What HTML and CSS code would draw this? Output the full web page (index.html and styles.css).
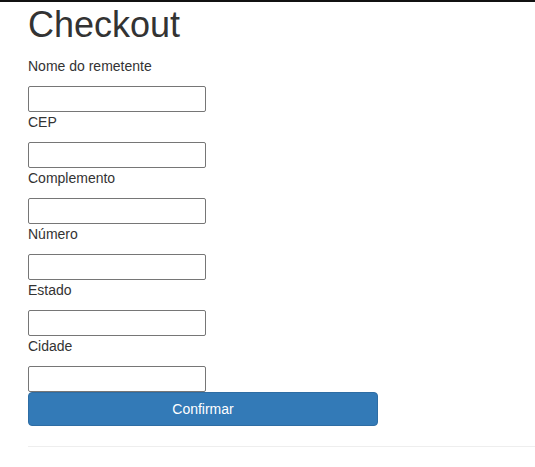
FILE: index.html
```
<!DOCTYPE html>
<html lang="pt-BR">
<head>
<meta charset="utf-8">
<title>Checkout</title>
<link rel="stylesheet" href="styles.css">
</head>
<body>
<div class="topbar"></div>
<main class="page">
  <h1 class="title">Checkout</h1>
  <form class="form">
    <label class="field-label" for="nome">Nome do remetente</label>
    <input class="field-input" id="nome" type="text">
    <label class="field-label" for="cep">CEP</label>
    <input class="field-input" id="cep" type="text">
    <label class="field-label" for="comp">Complemento</label>
    <input class="field-input" id="comp" type="text">
    <label class="field-label" for="num">Número</label>
    <input class="field-input" id="num" type="text">
    <label class="field-label" for="estado">Estado</label>
    <input class="field-input" id="estado" type="text">
    <label class="field-label" for="cidade">Cidade</label>
    <input class="field-input" id="cidade" type="text">
    <button class="btn-confirm" type="button">Confirmar</button>
  </form>
  <hr class="divider">
</main>
</body>
</html>
```
FILE: styles.css
```
html, body {
  margin: 0;
  padding: 0;
  background: #fff;
}
body {
  font-family: "Liberation Sans", Arial, Helvetica, sans-serif;
  font-size: 14px;
  line-height: 20px;
  color: #333;
  overflow: hidden;
}
.topbar {
  height: 2px;
  background: #111;
}
.page {
  padding-left: 28px;
}
.title {
  margin: 3px 0 0;
  font-size: 36px;
  font-weight: 500;
  line-height: 39.6px;
  color: #333;
}
.form {
  display: flex;
  flex-direction: column;
  align-items: flex-start;
  margin-top: 11px;
}
.field-label {
  display: block;
  line-height: 20px;
  margin-bottom: 10px;
  font-weight: normal;
}
.field-input {
  box-sizing: border-box;
  width: 178px;
  height: 26px;
  margin: 0;
  padding: 1px 2px;
  border: 1px solid #767676;
  border-radius: 2px;
  font: inherit;
  background: #fff;
}
.btn-confirm {
  box-sizing: border-box;
  width: 350px;
  height: 34px;
  margin: 0;
  padding: 6px 12px;
  font: inherit;
  color: #fff;
  background: #337ab7;
  border: 1px solid #2e6da4;
  border-radius: 4px;
  cursor: pointer;
}
.divider {
  margin: 20px 0 0;
  border: 0;
  border-top: 1px solid #eee;
  height: 0;
}
```
